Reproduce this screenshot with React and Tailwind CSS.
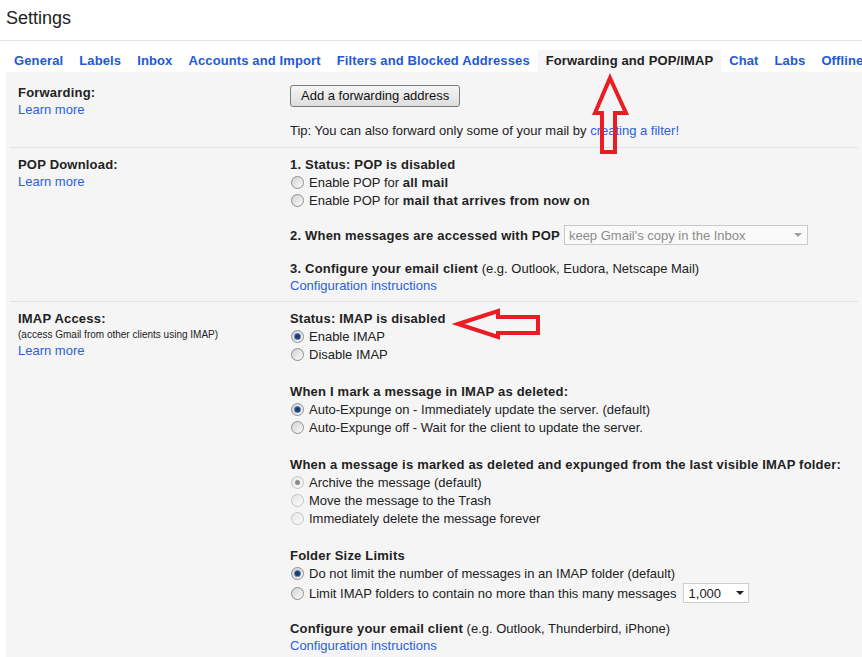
import React from 'react';

const font = { fontFamily: '"Liberation Sans", Arial, sans-serif' };

function Radio({ checked, faded }) {
  return (
    <span
      className={`w-[13px] h-[13px] shrink-0 rounded-full border flex items-center justify-center bg-linear-to-br ${
        faded ? 'border-[#c4c4c4] from-[#e6e6e6] to-[#fbfbfb]' : 'border-[#8e8e8e] from-[#d2d2d2] to-[#fbfbfb]'
      }`}
    >
      {checked && (
        <span className={`w-[5px] h-[5px] rounded-full ${faded ? 'bg-[#8a8a8a]' : 'bg-[#1f3d6b] shadow-[0_0_0_1px_#5d86c0]'}`} />
      )}
    </span>
  );
}

function Option({ checked, faded, children }) {
  return (
    <div className="flex items-center h-[18px] gap-[5px] pl-[1px]">
      <Radio checked={checked} faded={faded} />
      <span>{children}</span>
    </div>
  );
}

function B({ className = '', children }) {
  return <span className={`font-bold tracking-[0.2px] ${className}`}>{children}</span>;
}

function Link({ children }) {
  return <span className="text-[#2b5fd9] leading-[17px]">{children}</span>;
}

const tabs = [
  'General',
  'Labels',
  'Inbox',
  'Accounts and Import',
  'Filters and Blocked Addresses',
  'Forwarding and POP/IMAP',
  'Chat',
  'Labs',
  'Offline',
];

export default function App() {
  return (
    <div className="relative w-[862px] h-[657px] overflow-hidden bg-white text-[#222] text-[13px] leading-[17px]" style={font}>
      {/* Header */}
      <div className="h-[41px] border-b border-[#e3e3e3] pl-[6px] pt-[7px]">
        <h1 className="text-[18px] leading-[22px] font-normal text-[#222]">Settings</h1>
      </div>

      {/* Tabs */}
      <div className="flex pl-[6px] pt-[9px] whitespace-nowrap">
        {tabs.map((t) => {
          const active = t === 'Forwarding and POP/IMAP';
          return (
            <div
              key={t}
              className={`px-[8px] h-[22px] leading-[22px] font-bold tracking-[0.12px] ${
                active ? 'bg-[#f5f5f5] text-[#222]' : 'text-[#2358d6]'
              }`}
            >
              {t}
            </div>
          );
        })}
      </div>

      {/* Content */}
      <div className="ml-[6px] bg-[#f5f5f5] h-[600px] px-[4px]">
        {/* Forwarding */}
        <div className="flex pt-[12px] pb-[8px] px-[8px]">
          <div className="w-[272px] shrink-0 flex flex-col">
            <B>Forwarding:</B>
            <Link>Learn more</Link>
          </div>
          <div className="flex flex-col">
            <button className="self-start mt-[1px] h-[22px] px-[10px] rounded-[3px] border border-[#7a7a7a] bg-linear-to-b from-[#f6f6f6] to-[#dddddd] text-[#111] text-[13px] leading-[20px]">
              Add a forwarding address
            </button>
            <p className="mt-[15px] whitespace-nowrap">
              Tip: You can also forward only some of your mail by <Link>creating a filter!</Link>
            </p>
          </div>
        </div>

        {/* POP Download */}
        <div className="flex border-t border-[#e2e2e2] pt-[8px] pb-[7px] px-[8px]">
          <div className="w-[272px] shrink-0 flex flex-col">
            <B>POP Download:</B>
            <Link>Learn more</Link>
          </div>
          <div className="flex flex-col whitespace-nowrap">
            <B>1. Status: POP is disabled</B>
            <Option>
              Enable POP for <B>all mail</B>
            </Option>
            <Option>
              Enable POP for <B>mail that arrives from now on</B>
            </Option>
            <div className="mt-[16px] h-[20px] flex items-center">
              <B>2. When messages are accessed with POP</B>
              <div className="ml-[4px] w-[244px] h-[20px] border border-[#c9c9c9] bg-[#fafafa] flex items-center justify-between pl-[4px] pr-[5px]">
                <span className="text-[#8c8c8c]">keep Gmail's copy in the Inbox</span>
                <span className="w-0 h-0 border-l-[4px] border-r-[4px] border-t-[4px] border-l-transparent border-r-transparent border-t-[#a0a0a0]" />
              </div>
            </div>
            <div className="mt-[15px]">
              <B>3. Configure your email client</B> (e.g. Outlook, Eudora, Netscape Mail)
            </div>
            <Link>Configuration instructions</Link>
          </div>
        </div>

        {/* IMAP Access */}
        <div className="flex border-t border-[#e2e2e2] pt-[8px] px-[8px]">
          <div className="w-[272px] shrink-0 flex flex-col">
            <B>IMAP Access:</B>
            <span className="text-[10px] leading-[15px]">(access Gmail from other clients using IMAP)</span>
            <Link>Learn more</Link>
          </div>
          <div className="flex flex-col whitespace-nowrap">
            <B>Status: IMAP is disabled</B>
            <Option checked>Enable IMAP</Option>
            <Option>Disable IMAP</Option>

            <B className="mt-[20px]">When I mark a message in IMAP as deleted:</B>
            <Option checked>Auto-Expunge on - Immediately update the server. (default)</Option>
            <Option>Auto-Expunge off - Wait for the client to update the server.</Option>

            <B className="mt-[20px]">When a message is marked as deleted and expunged from the last visible IMAP folder:</B>
            <Option checked faded>Archive the message (default)</Option>
            <Option faded>Move the message to the Trash</Option>
            <Option faded>Immediately delete the message forever</Option>

            <B className="mt-[20px]">Folder Size Limits</B>
            <Option checked>Do not limit the number of messages in an IMAP folder (default)</Option>
            <div className="flex items-center h-[22px] gap-[5px] pl-[1px]">
              <Radio />
              <span>Limit IMAP folders to contain no more than this many messages</span>
              <div className="ml-[1px] w-[66px] h-[20px] border border-[#cfcfcf] bg-white flex items-center justify-between pl-[5px] pr-[4px]">
                <span>1,000</span>
                <span className="w-0 h-0 border-l-[4px] border-r-[4px] border-t-[4px] border-l-transparent border-r-transparent border-t-[#222]" />
              </div>
            </div>

            <div className="mt-[16px]">
              <B>Configure your email client</B> (e.g. Outlook, Thunderbird, iPhone)
            </div>
            <Link>Configuration instructions</Link>
          </div>
        </div>
      </div>

      {/* Red annotation arrows */}
      <svg className="absolute inset-0 pointer-events-none" width="862" height="657" viewBox="0 0 862 657">
        <polygon
          points="610,78 626,113 615,113 615,152 602,152 602,113 595,113"
          fill="none"
          stroke="#ec1c24"
          strokeWidth="4"
          strokeLinejoin="miter"
        />
        <polygon
          points="458,324 498,311 498,317 538,317 538,333 498,333 498,337"
          fill="none"
          stroke="#ec1c24"
          strokeWidth="4"
          strokeLinejoin="miter"
        />
      </svg>
    </div>
  );
}
